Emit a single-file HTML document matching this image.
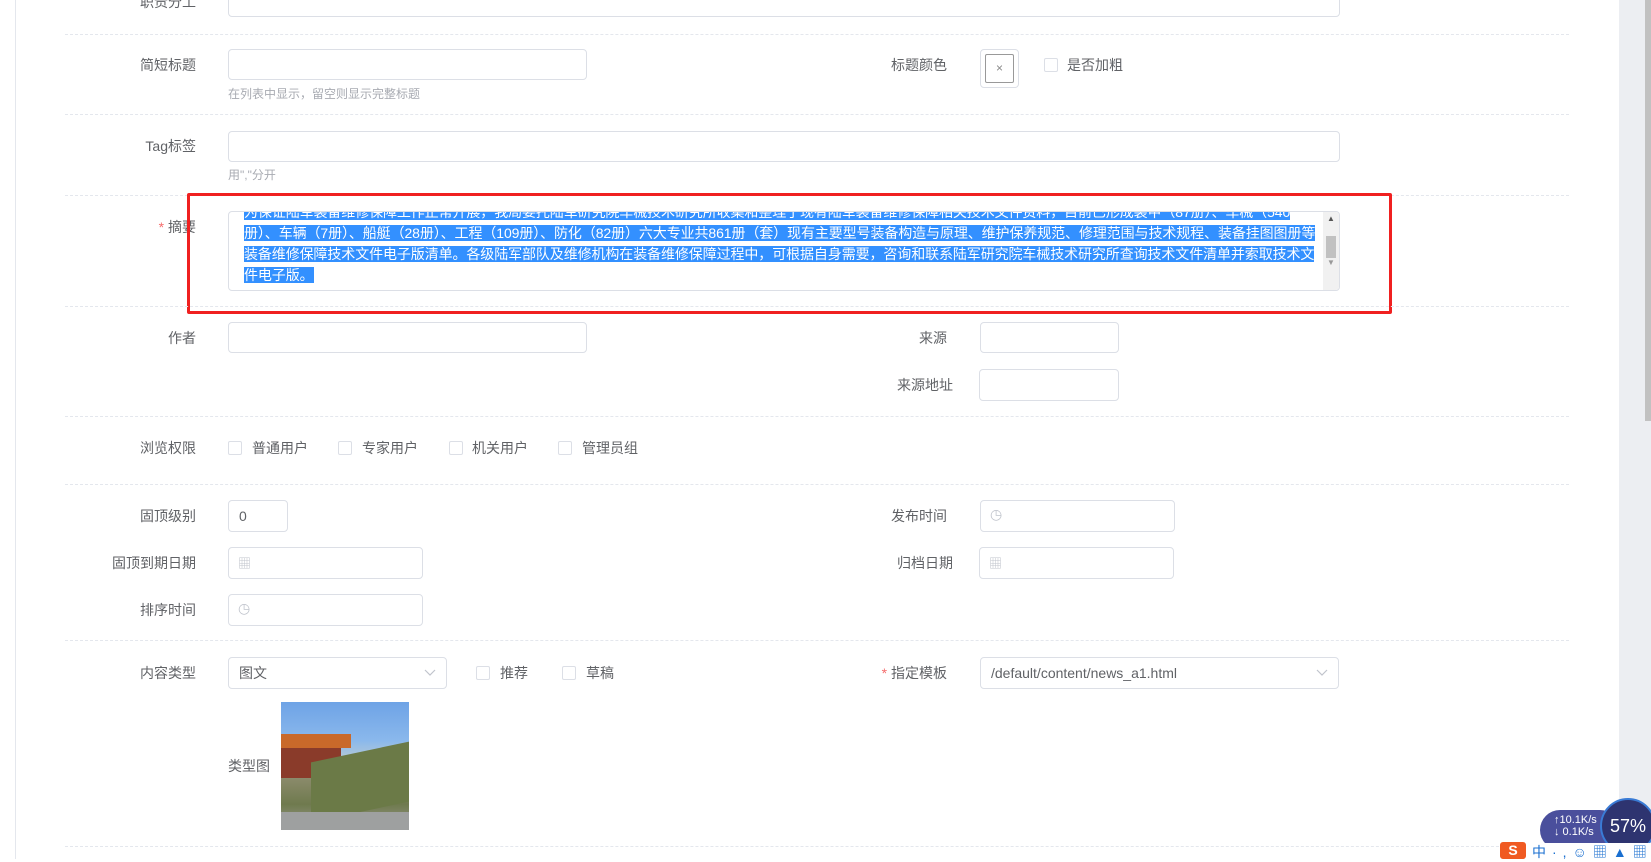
<!DOCTYPE html>
<html><head><meta charset="utf-8"><style>
*{box-sizing:border-box;margin:0;padding:0}
body{width:1651px;height:859px;overflow:hidden;background:#fff;font-family:"Liberation Sans","Noto Sans CJK SC",sans-serif;font-size:14px;color:#606266;position:relative}
.a{position:absolute}
.lbl{position:absolute;text-align:right;width:160px;left:36px;line-height:20px;white-space:nowrap}
.inp{position:absolute;border:1px solid #dcdfe6;border-radius:4px;background:#fff}
.sep{position:absolute;left:65px;width:1504px;border-top:1px dashed #e4e7ed}
.hint{position:absolute;font-size:12px;color:#a8abb2}
.cb{position:absolute;width:14px;height:14px;border:1px solid #dcdfe6;border-radius:2px;background:#fff}
.ct{position:absolute;line-height:20px}
.ic{position:absolute;color:#c0c4cc}
</style></head><body>
<div class="a" style="left:15px;top:0;width:1px;height:859px;background:#e4e7ed"></div>
<div class="a" style="left:1619px;top:0;width:32px;height:859px;background:#eceef2"></div>
<div class="a" style="left:1645px;top:0;width:6px;height:421px;background:#c1c1c1"></div>

<div class="lbl" style="top:-8px">职责分工</div>
<div class="inp" style="left:228px;top:-12px;width:1112px;height:29px"></div>
<div class="sep" style="top:34px"></div>

<div class="lbl" style="top:55px">简短标题</div>
<div class="inp" style="left:228px;top:49px;width:359px;height:31px"></div>
<div class="hint" style="left:228px;top:85px">在列表中显示，留空则显示完整标题</div>
<div class="lbl" style="left:787px;top:55px">标题颜色</div>
<div class="inp" style="left:980px;top:49px;width:39px;height:39px;padding:4px"><div style="width:29px;height:29px;border:1px solid #999;border-radius:2px;text-align:center;line-height:27px;color:#888;font-size:12px">×</div></div>
<div class="cb" style="left:1044px;top:58px"></div>
<div class="ct" style="left:1067px;top:55px">是否加粗</div>
<div class="sep" style="top:114px"></div>

<div class="lbl" style="top:136px">Tag标签</div>
<div class="inp" style="left:228px;top:131px;width:1112px;height:31px"></div>
<div class="hint" style="left:228px;top:166px">用","分开</div>
<div class="sep" style="top:195px"></div>

<div class="lbl" style="top:217px"><span style="color:#f56c6c">* </span>摘要</div>
<div class="inp" style="left:228px;top:211px;width:1112px;height:80px;overflow:hidden">
<div class="a" style="left:15px;top:-10px;width:1076px;font-size:14px;line-height:21px;color:#fff;letter-spacing:-0.1px">
<span style="background:#3390ff">为保证陆军装备维修保障工作正常开展，我局委托陆军研究院车械技术研究所收集和整理了现有陆军装备维修保障相关技术文件资料，目前已形成装甲（87册）、车械（540册）、车辆（7册）、船艇（28册）、工程（109册）、防化（82册）六大专业共861册（套）现有主要型号装备构造与原理、维护保养规范、修理范围与技术规程、装备挂图图册等装备维修保障技术文件电子版清单。各级陆军部队及维修机构在装备维修保障过程中，可根据自身需要，咨询和联系陆军研究院车械技术研究所查询技术文件清单并索取技术文件电子版。</span></div>
<div class="a" style="right:0;top:0;width:16px;height:78px;background:#f1f1f1"><div style="position:absolute;left:3px;top:24px;width:10px;height:22px;background:#c1c1c1"></div><div style="position:absolute;left:4px;top:2px;font-size:8px;color:#555">▲</div><div style="position:absolute;left:4px;top:46px;font-size:8px;color:#999">▼</div></div>
</div>
<div class="a" style="left:187px;top:193px;width:1205px;height:121px;border:3px solid #f02020;border-radius:2px"></div>
<div class="sep" style="top:306px"></div>

<div class="lbl" style="top:328px">作者</div>
<div class="inp" style="left:228px;top:322px;width:359px;height:31px"></div>
<div class="lbl" style="left:787px;top:328px">来源</div>
<div class="inp" style="left:980px;top:322px;width:139px;height:31px"></div>
<div class="lbl" style="left:793px;top:375px">来源地址</div>
<div class="inp" style="left:979px;top:369px;width:140px;height:32px"></div>
<div class="sep" style="top:416px"></div>

<div class="lbl" style="top:438px">浏览权限</div>
<div class="cb" style="left:228px;top:441px"></div><div class="ct" style="left:252px;top:438px">普通用户</div>
<div class="cb" style="left:338px;top:441px"></div><div class="ct" style="left:362px;top:438px">专家用户</div>
<div class="cb" style="left:449px;top:441px"></div><div class="ct" style="left:472px;top:438px">机关用户</div>
<div class="cb" style="left:558px;top:441px"></div><div class="ct" style="left:582px;top:438px">管理员组</div>
<div class="sep" style="top:484px"></div>

<div class="lbl" style="top:506px">固顶级别</div>
<div class="inp" style="left:228px;top:500px;width:60px;height:32px;padding-left:10px;line-height:30px;color:#606266">0</div>
<div class="lbl" style="left:787px;top:506px">发布时间</div>
<div class="inp" style="left:980px;top:500px;width:195px;height:32px"><span class="ic" style="left:9px;top:5px">◷</span></div>

<div class="lbl" style="top:553px">固顶到期日期</div>
<div class="inp" style="left:228px;top:547px;width:195px;height:32px"><span class="ic" style="left:9px;top:5px;font-size:13px">▦</span></div>
<div class="lbl" style="left:793px;top:553px">归档日期</div>
<div class="inp" style="left:979px;top:547px;width:195px;height:32px"><span class="ic" style="left:9px;top:5px;font-size:13px">▦</span></div>

<div class="lbl" style="top:600px">排序时间</div>
<div class="inp" style="left:228px;top:594px;width:195px;height:32px"><span class="ic" style="left:9px;top:5px">◷</span></div>
<div class="sep" style="top:640px"></div>

<div class="lbl" style="top:663px">内容类型</div>
<div class="inp" style="left:228px;top:657px;width:219px;height:32px;padding-left:10px;line-height:30px">图文<svg class="a" style="right:10px;top:11px" width="12" height="8" viewBox="0 0 12 8"><path d="M1 1l5 5 5-5" fill="none" stroke="#c0c4cc" stroke-width="1.2"/></svg></div>
<div class="cb" style="left:476px;top:666px"></div><div class="ct" style="left:500px;top:663px">推荐</div>
<div class="cb" style="left:562px;top:666px"></div><div class="ct" style="left:586px;top:663px">草稿</div>
<div class="lbl" style="left:787px;top:663px"><span style="color:#f56c6c">* </span>指定模板</div>
<div class="inp" style="left:980px;top:657px;width:359px;height:32px;padding-left:10px;line-height:30px">/default/content/news_a1.html<svg class="a" style="right:10px;top:11px" width="12" height="8" viewBox="0 0 12 8"><path d="M1 1l5 5 5-5" fill="none" stroke="#c0c4cc" stroke-width="1.2"/></svg></div>

<div class="ct" style="left:228px;top:756px">类型图</div>
<div class="a" style="left:281px;top:702px;width:128px;height:128px;overflow:hidden;background:linear-gradient(180deg,#6ea3e6 0%,#8ab8ec 30%,#b5c9d6 45%,#8a8a6a 60%,#6f7a4e 80%,#9a9a90 100%)">
<div class="a" style="left:0;top:32px;width:70px;height:14px;background:#c9692a"></div>
<div class="a" style="left:0;top:46px;width:60px;height:30px;background:#8a3b2a"></div>
<div class="a" style="left:30px;top:50px;width:98px;height:60px;background:#6b7a47;transform:skewY(-12deg)"></div>
<div class="a" style="left:0;top:110px;width:128px;height:18px;background:#9ea0a0"></div>
</div>
<div class="sep" style="top:846px"></div>

<div class="a" style="left:1540px;top:810px;width:80px;height:40px;border-radius:20px;background:#4a4f9c;color:#fff;font-size:11px;padding:4px 0 0 14px;white-space:nowrap">↑10.1K/s<br>↓ 0.1K/s</div>
<div class="a" style="left:1600px;top:798px;width:56px;height:56px;border-radius:50%;background:#2e3470;border:2px solid #3a7bd5;color:#fff;font-size:18px;line-height:52px;padding-left:8px">57%</div>
<div class="a" style="left:1500px;top:843px;width:151px;height:16px;background:#fff"></div>
<div class="a" style="left:1500px;top:842px;width:26px;height:17px;background:#f05a22;color:#fff;font-weight:bold;text-align:center;line-height:17px;border-radius:3px">S</div>
<div class="a" style="left:1532px;top:842px;color:#1a6fd0;font-size:14px;letter-spacing:6px;white-space:nowrap">中·,☺▦▲▦</div>
</body></html>
